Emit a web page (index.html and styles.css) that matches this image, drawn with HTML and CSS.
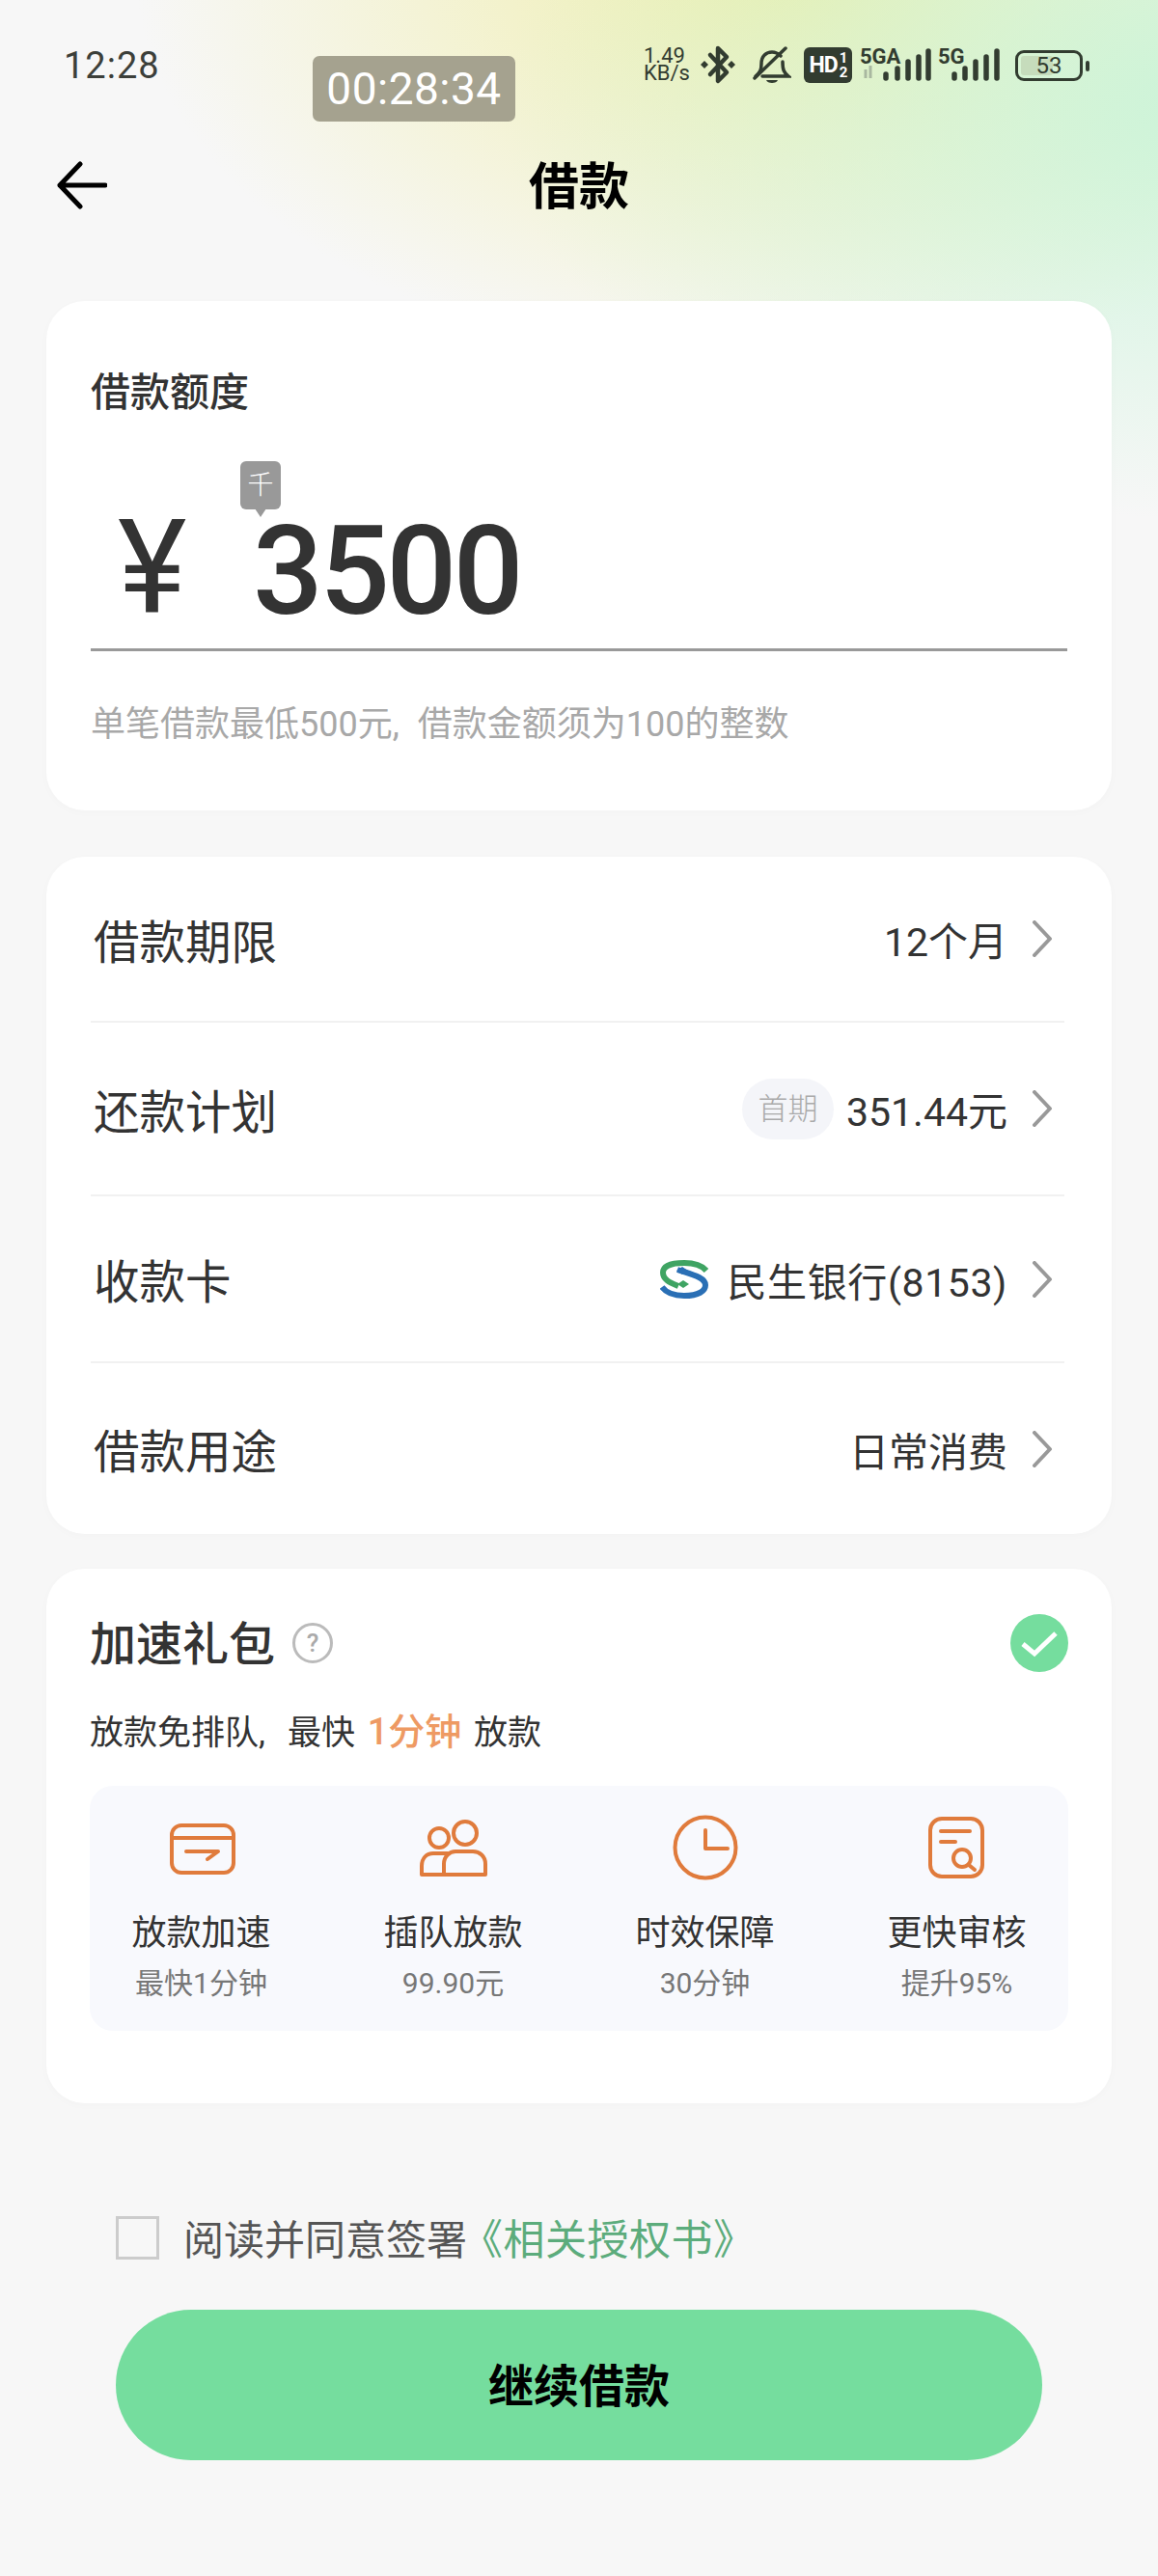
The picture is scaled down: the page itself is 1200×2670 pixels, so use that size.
FILE: index.html
```html
<!DOCTYPE html>
<html lang="zh-CN">

<head>
  <meta charset="UTF-8">
  <meta name="viewport" content="width=device-width, initial-scale=1.0">
  <title>借款</title>
  <link rel="stylesheet" href="styles.css">
</head>

<body>
  <div class="top">
    <div class="status">
      <span class="time">12:28</span>
      <span class="timer">00:28:34</span>
      <div class="status-right">
        <span class="speed">1.49<br>KB/s</span>
        <svg class="ic-bt" width="38" height="42" viewBox="0 0 38 42">
          <path d="M11 11 L28 29 L19 38 V4 L28 13 L11 31" fill="none" stroke="#323c30" stroke-width="4.5" stroke-linejoin="round" stroke-linecap="round" />
          <path d="M1 21 L5 17 L9 21 L5 25 Z M29 21 L33 17 L37 21 L33 25 Z" fill="#323c30" />
        </svg>
        <svg class="ic-bell" width="40" height="40" viewBox="0 0 40 40">
          <path d="M3 31 C8 27 9 24 9 18 C9 10 14 6 20 6 C24 6 27 8 29 10 M31 16 C31 24 32 27 37 31 H10" fill="none" stroke="#323c30" stroke-width="3.5" stroke-linecap="round" />
          <path d="M2 33 L34 2" stroke="#323c30" stroke-width="3.5" stroke-linecap="round" />
          <path d="M14 35 H26 C25 39 15 39 14 35 Z" fill="#323c30" />
        </svg>
        <span class="hd">HD<span class="hd-frac">1<br>2</span></span>
        <div class="sig sig-a">
          <span class="sig-name">5GA</span>
          <svg width="72" height="34" viewBox="0 0 72 34">
            <path d="M4 22 V31 M9 18 V31" stroke="#a9b8a0" stroke-width="3" />
            <path d="M25 31 V27 M37 31 V21 M48 31 V14 M59 31 V9 M69 31 V3" stroke="#323c30" stroke-width="5.5" stroke-linecap="round" />
          </svg>
        </div>
        <div class="sig sig-b">
          <span class="sig-name">5G</span>
          <svg width="52" height="34" viewBox="0 0 52 34">
            <path d="M4 31 V27 M15 31 V21 M26 31 V14 M37 31 V9 M48 31 V3" stroke="#323c30" stroke-width="5.5" stroke-linecap="round" />
          </svg>
        </div>
        <div class="battery">
          <div class="battery-body"><span class="battery-fill"></span><span class="battery-num">53</span></div>
          <span class="battery-nub"></span>
        </div>
      </div>
    </div>

    <div class="nav">
      <svg class="back" width="52" height="50" viewBox="0 0 52 50">
        <path d="M24 3 L3 25 L24 47 M3 25 H50" fill="none" stroke="#000" stroke-width="5" stroke-linecap="round" stroke-linejoin="round" />
      </svg>
      <h1>借款</h1>
    </div>
  </div>

  <section class="card amount">
    <div class="amount-label">借款额度</div>
    <div class="amount-input">
      <span class="yen">¥</span>
      <span class="amount-num">3500</span>
      <span class="unit-tip">千</span>
    </div>
    <div class="amount-hint">单笔借款最低500元<span class="comma">,</span>借款金额须为100的整数</div>
  </section>

  <section class="card rows">
    <div class="row row-1">
      <span class="row-name">借款期限</span>
      <span class="row-val">12个月</span>
      <svg class="chev" width="22" height="38" viewBox="0 0 22 38"><path d="M3 2 L19 19 L3 36" /></svg>
    </div>
    <div class="row row-2">
      <span class="row-name">还款计划</span>
      <span class="pill">首期</span>
      <span class="row-val">351.44元</span>
      <svg class="chev" width="22" height="38" viewBox="0 0 22 38"><path d="M3 2 L19 19 L3 36" /></svg>
    </div>
    <div class="row row-3">
      <span class="row-name">收款卡</span>
      <svg class="bank-logo" width="50" height="40" viewBox="0 0 50 40">
        <path d="M48 11 C42 4 33 3 25 3 C10 3 3 7 3 13 C3 21 12 24 19 27" fill="none" stroke="#3fa463" stroke-width="6" />
        <path d="M2 28 C7 35 16 37 25 37 C40 37 47 32 47 26 C47 18 33 15 18 10" fill="none" stroke="#2a6fb5" stroke-width="6" />
        <path d="M23 7 L29 11 L23 15 L17 11 Z" fill="#2a6fb5" />
        <path d="M24 21 L30 25 L24 29 L18 25 Z" fill="#3fa463" />
      </svg>
      <span class="row-val">民生银行(8153)</span>
      <svg class="chev" width="22" height="38" viewBox="0 0 22 38"><path d="M3 2 L19 19 L3 36" /></svg>
    </div>
    <div class="row row-4">
      <span class="row-name">借款用途</span>
      <span class="row-val">日常消费</span>
      <svg class="chev" width="22" height="38" viewBox="0 0 22 38"><path d="M3 2 L19 19 L3 36" /></svg>
    </div>
  </section>

  <section class="card boost">
    <div class="boost-head">
      <span class="boost-title">加速礼包</span>
      <span class="help">?</span>
      <svg class="check" width="60" height="60" viewBox="0 0 60 60">
        <circle cx="30" cy="30" r="30" fill="#75dd9e" />
        <path d="M13 31 L25 41 L47 20" fill="none" stroke="#fff" stroke-width="5" />
      </svg>
    </div>
    <div class="boost-sub">放款免排队<span class="comma">,</span>最快 <b>1分钟</b> 放款</div>
    <div class="perks">
      <div class="perks-inner">
        <div class="perk">
          <svg class="perk-ic" width="80" height="70" viewBox="0 0 80 70">
            <rect x="9" y="12" width="64" height="49" rx="10" />
            <path d="M9 25 H73 M24 39 H57 L46 47" />
          </svg>
          <div class="perk-name">放款加速</div>
          <div class="perk-sub">最快1分钟</div>
        </div>
        <div class="perk">
          <svg class="perk-ic" width="80" height="70" viewBox="0 0 80 70">
            <circle cx="52" cy="20" r="12" />
            <circle cx="25" cy="25" r="10" />
            <path d="M30 63 V52 C30 44 36 39 42 39 H60 C67 39 73 44 73 52 V63 Z" />
            <path d="M30 63 H7 V54 C7 46 12 41 19 41 H34" />
          </svg>
          <div class="perk-name">插队放款</div>
          <div class="perk-sub">99.90元</div>
        </div>
        <div class="perk">
          <svg class="perk-ic" width="80" height="70" viewBox="0 0 80 70">
            <circle cx="40" cy="35" r="31.5" />
            <path d="M40 17 V36 H63" />
          </svg>
          <div class="perk-name">时效保障</div>
          <div class="perk-sub">30分钟</div>
        </div>
        <div class="perk">
          <svg class="perk-ic" width="80" height="70" viewBox="0 0 80 70">
            <rect x="12" y="5" width="54" height="60" rx="12" />
            <path d="M23 18 H53 M23 29 H38" />
            <circle cx="45" cy="46" r="9" />
            <path d="M52 53 L58 58" />
          </svg>
          <div class="perk-name">更快审核</div>
          <div class="perk-sub">提升95%</div>
        </div>
      </div>
    </div>
  </section>

  <div class="agree">
    <span class="agree-box"></span>
    <span class="agree-text">阅读并同意签署</span>
    <span class="agree-link">《相关授权书》</span>
  </div>

  <button class="btn-next" type="button">继续借款</button>
</body>

</html>
```

FILE: styles.css
```css
* {
  box-sizing: border-box;
}

body {
  margin: 0;
  height: 2670px;
  overflow: hidden;
  font-family: Roboto, 'Noto Sans CJK SC', sans-serif;
  color: #333;
  background-color: #f7f7f7;
  background-image:
    radial-gradient(ellipse 760px 430px at 1280px 110px, rgba(200, 244, 216, 0.95), rgba(200, 244, 216, 0) 100%),
    radial-gradient(ellipse 680px 420px at 820px -30px, rgba(240, 238, 170, 1), rgba(244, 240, 188, 0) 100%);
  background-repeat: no-repeat;
}

.top {
  height: 312px;
}

.status {
  position: relative;
  display: flex;
  align-items: flex-start;
  padding: 46px 71px 0 66px;
  height: 146px;
}

.time {
  font-size: 38px;
  letter-spacing: 1px;
  line-height: 44px;
  color: #3c3f3a;
}

.timer {
  position: absolute;
  left: 324px;
  top: 58px;
  width: 210px;
  height: 68px;
  border-radius: 7px;
  background: #a5a28f;
  color: #fff;
  font-size: 46px;
  letter-spacing: 0.5px;
  line-height: 68px;
  text-align: center;
}

.status-right {
  display: flex;
  align-items: flex-start;
  margin-left: auto;
  color: #323c30;
}

.speed {
  width: 58px;
  margin-top: 3px;
  font-size: 22px;
  line-height: 18px;
  text-align: left;
}

.ic-bell {
  margin-left: 17px;
  margin-top: 2px;
}

.hd {
  display: flex;
  align-items: center;
  justify-content: center;
  width: 50px;
  height: 37px;
  margin: 3px 0 0 13px;
  border-radius: 6px;
  background: #323c30;
  color: #fff;
  font-size: 23px;
  font-weight: 700;
  letter-spacing: -1px;
}

.hd-frac {
  font-size: 15px;
  line-height: 15px;
  margin-left: 2px;
}

.sig {
  position: relative;
  height: 38px;
  margin-top: 4px;
}

.sig svg {
  display: block;
}

.sig-name {
  position: absolute;
  left: 0;
  top: -1px;
  font-size: 22px;
  line-height: 20px;
  font-weight: 700;
}

.sig-a {
  margin-left: 8px;
  width: 74px;
}

.sig-a svg {
  margin-left: 2px;
}

.sig-b {
  margin-left: 7px;
  width: 65px;
}

.sig-b svg {
  margin-left: 13px;
}

.battery {
  display: flex;
  align-items: center;
  margin: 6px 0 0 15px;
}

.battery-body {
  position: relative;
  width: 70px;
  height: 32px;
  border: 3px solid #323c30;
  border-radius: 9px;
  text-align: center;
  font-size: 24px;
  line-height: 26px;
}

.battery-fill {
  position: absolute;
  left: 3px;
  top: 3px;
  bottom: 3px;
  width: 33px;
  border-radius: 3px;
  background: #c6dcbc;
}

.battery-num {
  position: relative;
}

.battery-nub {
  width: 4px;
  height: 11px;
  margin-left: 3px;
  border-radius: 2px;
  background: #323c30;
}

.nav {
  position: relative;
  display: flex;
  justify-content: center;
  align-items: center;
  height: 92px;
}

.back {
  position: absolute;
  left: 59px;
  top: 21px;
}

h1 {
  margin: 0;
  padding-top: 6px;
  font-size: 52px;
  font-weight: 700;
  line-height: 92px;
  color: #000;
}

.card {
  margin: 0 48px;
  border-radius: 40px;
  background: #fff;
  box-shadow: 0 2px 10px rgba(0, 0, 0, 0.02);
}

.amount {
  height: 528px;
  padding: 65px 46px 0;
}

.amount-label {
  font-size: 41px;
  line-height: 60px;
  font-weight: 500;
  color: #333;
}

.amount-input {
  position: relative;
  display: flex;
  align-items: flex-end;
  height: 238px;
  padding: 0 0 30px 28px;
  border-bottom: 3px solid #999;
}

.yen {
  width: 140px;
  margin-bottom: 4px;
  font-size: 136px;
  line-height: 100px;
}

.amount-num {
  font-size: 128px;
  line-height: 100px;
  font-weight: 500;
  letter-spacing: -3.5px;
}

.unit-tip {
  position: absolute;
  left: 155px;
  top: 41px;
  width: 42px;
  height: 50px;
  border-radius: 6px;
  background: #999;
  color: #fff;
  font-size: 27px;
  line-height: 50px;
  font-weight: 300;
  text-align: center;
}

.unit-tip::after {
  content: '';
  position: absolute;
  left: 15px;
  top: 49px;
  border: 6px solid transparent;
  border-top: 9px solid #999;
}

.amount-hint {
  margin-top: 51px;
  font-size: 36px;
  line-height: 50px;
  color: #a8a8a8;
}

.comma {
  display: inline-block;
  width: 26px;
}

.rows {
  height: 702px;
  margin-top: 48px;
  padding: 0 49px 0 46px;
}

.row {
  display: flex;
  align-items: center;
  border-bottom: 2px solid #f1f1f1;
}

.row-1 {
  height: 172px;
}

.row-2 {
  height: 180px;
}

.row-3 {
  height: 173px;
}

.row-4 {
  height: 177px;
  border-bottom: none;
}

.row-name {
  margin: 0 auto 0 3px;
  font-size: 47.5px;
  color: #333;
}

.row-val {
  font-size: 41px;
  color: #333;
}

.row-3 .row-val {
  letter-spacing: 0.6px;
}

.chev {
  margin: 0 12px 0 25px;
}

.chev path {
  fill: none;
  stroke: #999;
  stroke-width: 4;
  stroke-linecap: round;
  stroke-linejoin: round;
}

.pill {
  width: 95px;
  height: 63px;
  margin-right: 13px;
  border-radius: 32px;
  background: #f4f5f9;
  color: #aaa;
  font-size: 31px;
  font-weight: 300;
  line-height: 63px;
  text-align: center;
}

.bank-logo {
  margin-right: 20px;
}

.boost {
  height: 554px;
  margin-top: 36px;
  padding: 47px 45px 0;
}

.boost-head {
  display: flex;
  align-items: center;
  height: 60px;
}

.boost-title {
  padding-bottom: 6px;
  font-size: 48px;
  font-weight: 500;
  color: #333;
}

.help {
  width: 42px;
  height: 42px;
  margin-left: 18px;
  border: 3px solid #bbb;
  border-radius: 50%;
  color: #aaa;
  font-size: 26px;
  font-weight: 500;
  line-height: 36px;
  text-align: center;
}

.check {
  margin-left: auto;
}

.boost-sub {
  margin-top: 32px;
  font-size: 35px;
  line-height: 60px;
  color: #333;
}

.boost-sub .comma {
  width: 30px;
}

.boost-sub b {
  margin: 0 4px;
  font-size: 38px;
  font-weight: 500;
  color: #ee9a63;
}

.perks {
  height: 254px;
  margin-top: 24px;
  border-radius: 24px;
  background: #f8f9fd;
}

.perks-inner {
  display: grid;
  grid-template-columns: repeat(4, 261px);
  margin: 0 -15px;
  padding-top: 29px;
}

.perk {
  text-align: center;
}

.perk-ic {
  display: block;
  margin: 0 auto;
}

.perk-ic rect,
.perk-ic circle,
.perk-ic path {
  fill: none;
  stroke: #e07b3c;
  stroke-width: 4;
  stroke-linecap: round;
  stroke-linejoin: round;
}

.perk-name {
  margin-top: 29px;
  font-size: 36px;
  line-height: 50px;
  color: #333;
}

.perk-sub {
  margin-top: 6px;
  font-size: 30px;
  line-height: 42px;
  color: #777;
}

.agree {
  display: flex;
  align-items: center;
  height: 60px;
  margin-top: 108px;
  padding-left: 120px;
}

.agree-box {
  flex: none;
  width: 45px;
  height: 45px;
  margin: 2px 25px 0 0;
  border: 3px solid #ccc;
}

.agree-text {
  font-size: 42px;
  color: #555;
}

.agree-link {
  margin-left: -6px;
  font-size: 43px;
  letter-spacing: 0.5px;
  color: #5cac7c;
}

.btn-next {
  display: block;
  width: 960px;
  height: 156px;
  margin: 46px auto 0;
  padding: 0 0 6px;
  border: none;
  border-radius: 78px;
  background: #75dd9e;
  color: #000;
  font-family: inherit;
  font-size: 47px;
  font-weight: 700;
}
```
